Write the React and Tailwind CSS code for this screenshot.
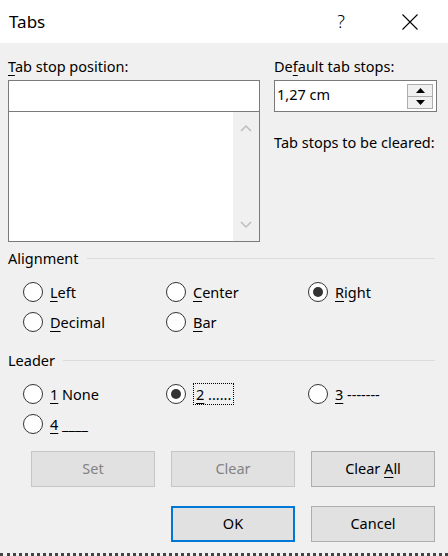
import React from 'react';

function Radio({ checked }) {
  return (
    <span className="w-[20px] h-[20px] rounded-full border border-[#333] bg-white flex items-center justify-center shrink-0">
      {checked && <span className="w-[10px] h-[10px] rounded-full bg-[#333]" />}
    </span>
  );
}

function Option({ checked, children, focused }) {
  return (
    <label className="flex items-center gap-[7px] h-[30px]">
      <Radio checked={checked} />
      {focused ? (
        <span className="border border-dotted border-black px-[2px] leading-[20px]">{children}</span>
      ) : (
        <span className="leading-[20px]">{children}</span>
      )}
    </label>
  );
}

function Key({ children }) {
  return <u className="underline underline-offset-[3px] decoration-1">{children}</u>;
}

function GroupHeader({ title }) {
  return (
    <div className="flex items-center gap-[8px] h-[20px] pl-[8px] pr-[13px]">
      <span className="leading-[20px]">{title}</span>
      <div className="flex-1 h-px bg-[#dcdcdc]" />
    </div>
  );
}

function Button({ children, disabled, primary }) {
  return (
    <button
      className={
        primary
          ? 'w-[124px] h-[36px] bg-[#e1e1e1] border-2 border-[#0078d7] text-black'
          : disabled
          ? 'w-[124px] h-[36px] bg-[#e1e1e1] border border-[#c6c6c6] text-[#838383]'
          : 'w-[124px] h-[36px] bg-[#e1e1e1] border border-[#adadad] text-black'
      }
    >
      {children}
    </button>
  );
}

export default function App() {
  return (
    <div className="w-[448px] h-[556px] bg-[#f0f0f0] flex flex-col text-[14.5px] text-black font-['Noto_Sans',sans-serif] overflow-hidden">
      {/* title bar */}
      <div className="h-[43px] bg-white flex items-center pl-[9px] shrink-0">
        <span className="text-[17px]">Tabs</span>
        <span className="ml-auto text-[18px] font-light mr-[57px]">?</span>
        <svg width="16" height="16" viewBox="0 0 16 16" className="mr-[30px]">
          <path d="M0.5 0.5 L15.5 15.5 M15.5 0.5 L0.5 15.5" stroke="#000" strokeWidth="1.1" />
        </svg>
      </div>

      {/* top fields */}
      <div className="flex pl-[8px] pt-[13px] gap-[14px]">
        <div className="w-[252px] flex flex-col">
          <div className="leading-[20px]">
            <Key>T</Key>ab stop position:
          </div>
          <div className="mt-[4px] h-[32px] bg-white border border-[#7a7a7a]" />
          <div className="h-[130px] bg-white border border-[#7a7a7a] border-t-0 flex justify-end">
            <div className="w-[26px] bg-[#f0f0f0] flex flex-col items-center justify-between py-[12px]">
              <svg width="12" height="8" viewBox="0 0 12 8">
                <path d="M1 7 L6 2 L11 7" fill="none" stroke="#bdbdbd" strokeWidth="1.5" />
              </svg>
              <svg width="12" height="8" viewBox="0 0 12 8">
                <path d="M1 1 L6 6 L11 1" fill="none" stroke="#bdbdbd" strokeWidth="1.5" />
              </svg>
            </div>
          </div>
        </div>
        <div className="w-[163px] flex flex-col">
          <div className="leading-[20px]">
            De<Key>f</Key>ault tab stops:
          </div>
          <div className="mt-[4px] h-[32px] bg-white border border-[#7a7a7a] flex items-center pl-[2px] pr-[3px]">
            <span className="flex-1 pb-[3px]">1,27 cm</span>
            <div className="flex flex-col w-[26px] h-[25px] border border-[#adadad]">
              <div className="flex-1 bg-[#f0f0f0] border-b border-[#adadad] flex items-center justify-center">
                <svg width="9" height="5" viewBox="0 0 9 5"><path d="M0 5 L4.5 0 L9 5 Z" fill="#000" /></svg>
              </div>
              <div className="flex-1 bg-[#f0f0f0] flex items-center justify-center">
                <svg width="9" height="5" viewBox="0 0 9 5"><path d="M0 0 L4.5 5 L9 0 Z" fill="#000" /></svg>
              </div>
            </div>
          </div>
          <div className="mt-[20px] leading-[20px] whitespace-nowrap">Tab stops to be cleared:</div>
        </div>
      </div>

      {/* alignment */}
      <div className="mt-[6px]">
        <GroupHeader title="Alignment" />
        <div className="grid grid-cols-[143px_142px_1fr] pl-[23px] mt-[9px]">
          <Option><Key>L</Key>eft</Option>
          <Option><Key>C</Key>enter</Option>
          <Option checked><Key>R</Key>ight</Option>
          <Option><Key>D</Key>ecimal</Option>
          <Option><Key>B</Key>ar</Option>
        </div>
      </div>

      {/* leader */}
      <div className="mt-[13px]">
        <GroupHeader title="Leader" />
        <div className="grid grid-cols-[143px_142px_1fr] pl-[23px] mt-[9px]">
          <Option><Key>1</Key> None</Option>
          <Option checked focused><Key>2</Key> ......</Option>
          <Option><Key>3</Key> -------</Option>
          <Option><Key>4</Key> ____</Option>
        </div>
      </div>

      {/* buttons */}
      <div className="flex gap-[16px] pl-[31px] mt-[12px]">
        <Button disabled>Set</Button>
        <Button disabled>Clear</Button>
        <Button>Clear <Key>A</Key>ll</Button>
      </div>
      <div className="flex gap-[16px] pl-[171px] mt-[19px]">
        <Button primary>OK</Button>
        <Button>Cancel</Button>
      </div>

      <div className="mt-auto h-[3px] border-t-[3px] border-dotted border-[#444]" />
    </div>
  );
}
